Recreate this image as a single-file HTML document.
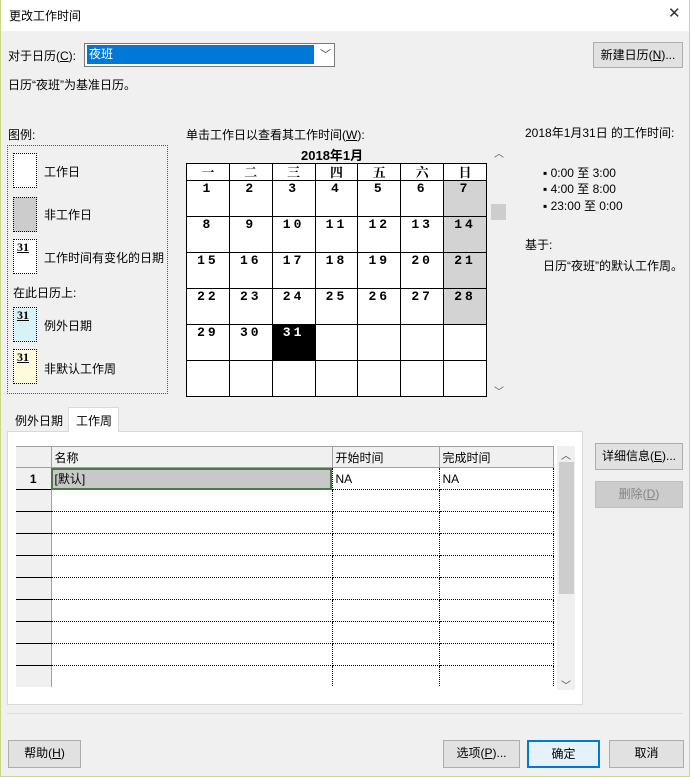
<!DOCTYPE html>
<html><head><meta charset="utf-8"><style>
*{margin:0;padding:0;box-sizing:border-box}
body{width:690px;height:777px;overflow:hidden;background:#f0f0f0;font-family:"Liberation Sans","Noto Sans CJK SC",sans-serif;font-size:12px;color:#000;position:relative}
.a{position:absolute;white-space:nowrap}
.btn{position:absolute;background:#e1e1e1;border:1px solid #adadad;text-align:center;line-height:25px;font-size:12px}
.sw{position:absolute;left:13px;width:24px;height:35px;border:1px dotted #000}
.sw b{position:absolute;left:3px;top:0;font-family:"Liberation Serif",serif;font-size:12px;text-decoration:underline}
.cal{position:absolute;left:186px;top:163px;border-collapse:collapse;table-layout:fixed;width:301px}
.cal td{border:1px solid #000;height:36px;vertical-align:top;text-align:center;font-weight:bold;font-size:13px;font-family:"Liberation Mono","Noto Sans CJK SC",monospace;background:#fff;letter-spacing:3px;line-height:14px;padding-top:1px}
.cal tr.h td{height:17px;line-height:15px;font-family:"Noto Serif CJK SC",serif;letter-spacing:0;padding:0}
.cal td.g{background:#d3d3d3}
.cal td.k{background:#000;color:#fff}
.grid{position:absolute;left:16px;top:446px;border-collapse:collapse;background:#fff}
.grid td{height:22px;border-bottom:1px dotted #000;border-right:1px dotted #000;padding-left:3px;font-size:12px}
.grid td.n{background:#f0f0f0;border-bottom:1px solid #000;border-right:1px solid #a0a0a0;text-align:center;font-weight:bold;width:35px;padding:0}
.grid tr.h td{background:#f0f0f0;border-bottom:1px solid #a0a0a0;border-right:1px solid #a0a0a0;height:21px;border-top:1px solid #a0a0a0}
</style></head><body>
<div class="a" style="left:0;top:0;width:690px;height:31px;background:#fff"></div>
<div class="a" style="left:9px;top:7px;font-size:12px">更改工作时间</div>
<div class="a" style="left:668px;top:4px;font-size:15px;color:#333;font-weight:normal">✕</div>
<div class="a" style="left:0;top:0;width:1px;height:777px;background:#c8d88a"></div>
<div class="a" style="left:689px;top:0;width:1px;height:777px;background:#c8d88a"></div>
<div class="a" style="left:0;top:776px;width:690px;height:1px;background:#c8d88a"></div>

<div class="a" style="left:8px;top:47px">对于日历(<u>C</u>):</div>
<div class="a" style="left:84px;top:43px;width:251px;height:24px;background:#fff;border:1px solid #7a7a7a"></div>
<div class="a" style="left:87px;top:45px;width:227px;height:19px;background:#0078d7;color:#fff;padding-left:2px;line-height:19px">夜班</div>
<div class="a" style="left:320px;top:46px;font-size:11px;color:#444">﹀</div>
<div class="btn" style="left:593px;top:42px;width:90px;height:26px">新建日历(<u>N</u>)...</div>
<div class="a" style="left:8px;top:76px">日历“夜班”为基准日历。</div>

<div class="a" style="left:8px;top:126px">图例:</div>
<div class="a" style="left:7px;top:145px;width:161px;height:249px;border:1px dotted #555"></div>
<div class="sw" style="top:153px;background:#fff"></div><div class="a" style="left:44px;top:163px">工作日</div>
<div class="sw" style="top:197px;background:#ccc"></div><div class="a" style="left:44px;top:206px">非工作日</div>
<div class="sw" style="top:239px;background:#fff"><b>31</b></div><div class="a" style="left:44px;top:249px">工作时间有变化的日期</div>
<div class="a" style="left:13px;top:284px">在此日历上:</div>
<div class="sw" style="top:307px;background:#d8f3f8"><b>31</b></div><div class="a" style="left:44px;top:317px">例外日期</div>
<div class="sw" style="top:349px;background:#fdfbdc"><b>31</b></div><div class="a" style="left:44px;top:360px">非默认工作周</div>

<div class="a" style="left:186px;top:126px">单击工作日以查看其工作时间(<u>W</u>):</div>
<div class="a" style="left:301px;top:145px;font-weight:bold;font-size:13px">2018年1月</div>
<table class="cal">
<tr class="h"><td>一</td><td>二</td><td>三</td><td>四</td><td>五</td><td>六</td><td>日</td></tr>
<tr><td>1</td><td>2</td><td>3</td><td>4</td><td>5</td><td>6</td><td class="g">7</td></tr>
<tr><td>8</td><td>9</td><td>10</td><td>11</td><td>12</td><td>13</td><td class="g">14</td></tr>
<tr><td>15</td><td>16</td><td>17</td><td>18</td><td>19</td><td>20</td><td class="g">21</td></tr>
<tr><td>22</td><td>23</td><td>24</td><td>25</td><td>26</td><td>27</td><td class="g">28</td></tr>
<tr><td>29</td><td>30</td><td class="k">31</td><td></td><td></td><td></td><td></td></tr>
<tr><td></td><td></td><td></td><td></td><td></td><td></td><td></td></tr>
</table>
<div class="a" style="left:494px;top:145px;font-size:10px;color:#555">︿</div>
<div class="a" style="left:491px;top:204px;width:15px;height:16px;background:#cdcdcd"></div>
<div class="a" style="left:494px;top:383px;font-size:10px;color:#555">﹀</div>

<div class="a" style="left:525px;top:124px">2018年1月31日 的工作时间:</div>
<div class="a" style="left:543px;top:164px">▪ 0:00 至 3:00</div>
<div class="a" style="left:543px;top:180px">▪ 4:00 至 8:00</div>
<div class="a" style="left:543px;top:197px">▪ 23:00 至 0:00</div>
<div class="a" style="left:525px;top:236px">基于:</div>
<div class="a" style="left:543px;top:257px">日历“夜班”的默认工作周。</div>

<div class="a" style="left:7px;top:431px;width:576px;height:274px;background:#fff;border:1px solid #d9d9d9"></div>
<div class="a" style="left:15px;top:412px">例外日期</div>
<div class="a" style="left:68px;top:407px;width:51px;height:25px;background:#fff;border:1px solid #d9d9d9;border-bottom:none;padding:4px 0 0 7px">工作周</div>
<table class="grid">
<tr class="h"><td class="n" style="border-bottom:1px solid #a0a0a0"></td><td style="width:281px">名称</td><td style="width:107px">开始时间</td><td style="width:114px">完成时间</td></tr>
<tr><td class="n">1</td><td style="background:#c8c8c8;outline:2px solid #4a7a46;outline-offset:-2px">[默认]</td><td>NA</td><td>NA</td></tr>
<tr><td class="n"></td><td></td><td></td><td></td></tr>
<tr><td class="n"></td><td></td><td></td><td></td></tr>
<tr><td class="n"></td><td></td><td></td><td></td></tr>
<tr><td class="n"></td><td></td><td></td><td></td></tr>
<tr><td class="n"></td><td></td><td></td><td></td></tr>
<tr><td class="n"></td><td></td><td></td><td></td></tr>
<tr><td class="n"></td><td></td><td></td><td></td></tr>
<tr><td class="n"></td><td></td><td></td><td></td></tr>
<tr><td class="n"></td><td></td><td></td><td></td></tr>
</table>
<div class="a" style="left:16px;top:687px;width:560px;height:17px;background:#fff"></div>
<div class="a" style="left:557px;top:446px;width:18px;height:244px;background:#f0f0f0"></div>
<div class="a" style="left:559px;top:462px;width:15px;height:132px;background:#cdcdcd"></div>
<div class="a" style="left:561px;top:447px;font-size:10px;color:#444">︿</div>
<div class="a" style="left:561px;top:677px;font-size:10px;color:#444">﹀</div>

<div class="btn" style="left:595px;top:443px;width:88px;height:27px">详细信息(<u>E</u>)...</div>
<div class="btn" style="left:595px;top:481px;width:88px;height:27px;background:#ccc;border-color:#bfbfbf;color:#838383">删除(<u>D</u>)</div>

<div class="a" style="left:7px;top:713px;width:676px;height:1px;background:#dcdcdc"></div>
<div class="btn" style="left:8px;top:740px;width:73px;height:28px">帮助(<u>H</u>)</div>
<div class="btn" style="left:443px;top:740px;width:77px;height:28px">选项(<u>P</u>)...</div>
<div class="btn" style="left:527px;top:740px;width:73px;height:28px;border:2px solid #0078d7;background:#e5f1fb;line-height:24px">确定</div>
<div class="btn" style="left:609px;top:740px;width:75px;height:28px">取消</div>
</body></html>
